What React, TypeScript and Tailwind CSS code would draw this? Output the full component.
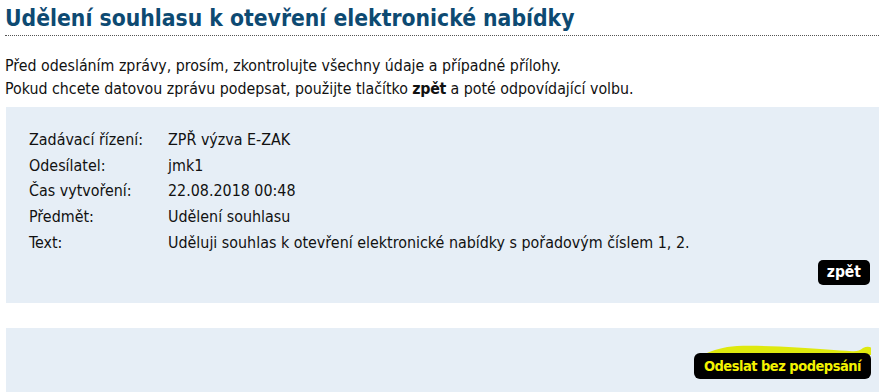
import React from "react";

const rows: [string, string][] = [
  ["Zadávací řízení:", "ZPŘ výzva E-ZAK"],
  ["Odesílatel:", "jmk1"],
  ["Čas vytvoření:", "22.08.2018 00:48"],
  ["Předmět:", "Udělení souhlasu"],
  ["Text:", "Uděluji souhlas k otevření elektronické nabídky s pořadovým číslem 1, 2."],
];

export default function App() {
  return (
    <div
      className="w-[879px] h-[392px] overflow-hidden bg-white text-[#111]"
      style={{ fontFamily: '"DejaVu Sans Condensed", "DejaVu Sans", sans-serif' }}
    >
      <div className="ml-[5px] pt-[4px] pb-[3px] border-b border-dotted border-[#555]">
        <h1 className="text-[22.7px] leading-[28px] font-bold text-[#0d4a72]">
          Udělení souhlasu k otevření elektronické nabídky
        </h1>
      </div>
      <div className="ml-[5px] mt-[18px] text-[15.8px] leading-[23px]">
        <p>Před odesláním zprávy, prosím, zkontrolujte všechny údaje a případné přílohy.</p>
        <p>
          Pokud chcete datovou zprávu podepsat, použijte tlačítko{" "}
          <b className="tracking-[-0.3px]">zpět</b> a poté odpovídající volbu.
        </p>
      </div>
      <div className="ml-[6px] mt-[7px] bg-[#e6eef6] pt-[20px] pb-[18px] pl-[23px] pr-[9px] text-[15.9px]">
        <div className="flex flex-col">
          {rows.map(([k, v]) => (
            <div key={k} className="flex h-[25.75px] items-center">
              <div className="w-[139px] shrink-0">{k}</div>
              <div>{v}</div>
            </div>
          ))}
        </div>
        <div className="flex justify-end mt-[4px]">
          <button className="h-[25px] px-[9px] rounded-[5px] bg-black text-white font-bold text-[15.5px] leading-[25px]">
            zpět
          </button>
        </div>
      </div>
      <div className="ml-[6px] mt-[25px] h-[80px] bg-[#e6eef6] pt-[17px] pr-[8px] flex justify-end items-start">
        <div className="flex flex-col items-end">
          <svg className="block mb-[-2px]" width="166" height="10" viewBox="0 0 166 10">
            <path
              d="M0 9 C 8 5, 18 2, 32 1 C 50 0.5, 72 1.2, 92 2.4 C 114 3.8, 132 5, 147 6.2 C 152 6.5, 155 5.5, 158 3 C 161 1.5, 164 1.5, 166 2.5 L 166 10 L 0 10 Z"
              fill="#dfe90e"
            />
          </svg>
          <button className="relative block h-[26px] px-[10px] rounded-[6px] bg-black text-[#f3f300] font-bold text-[14.5px] tracking-[-0.5px] leading-[26px]">
            Odeslat bez podepsání
          </button>
        </div>
      </div>
    </div>
  );
}
